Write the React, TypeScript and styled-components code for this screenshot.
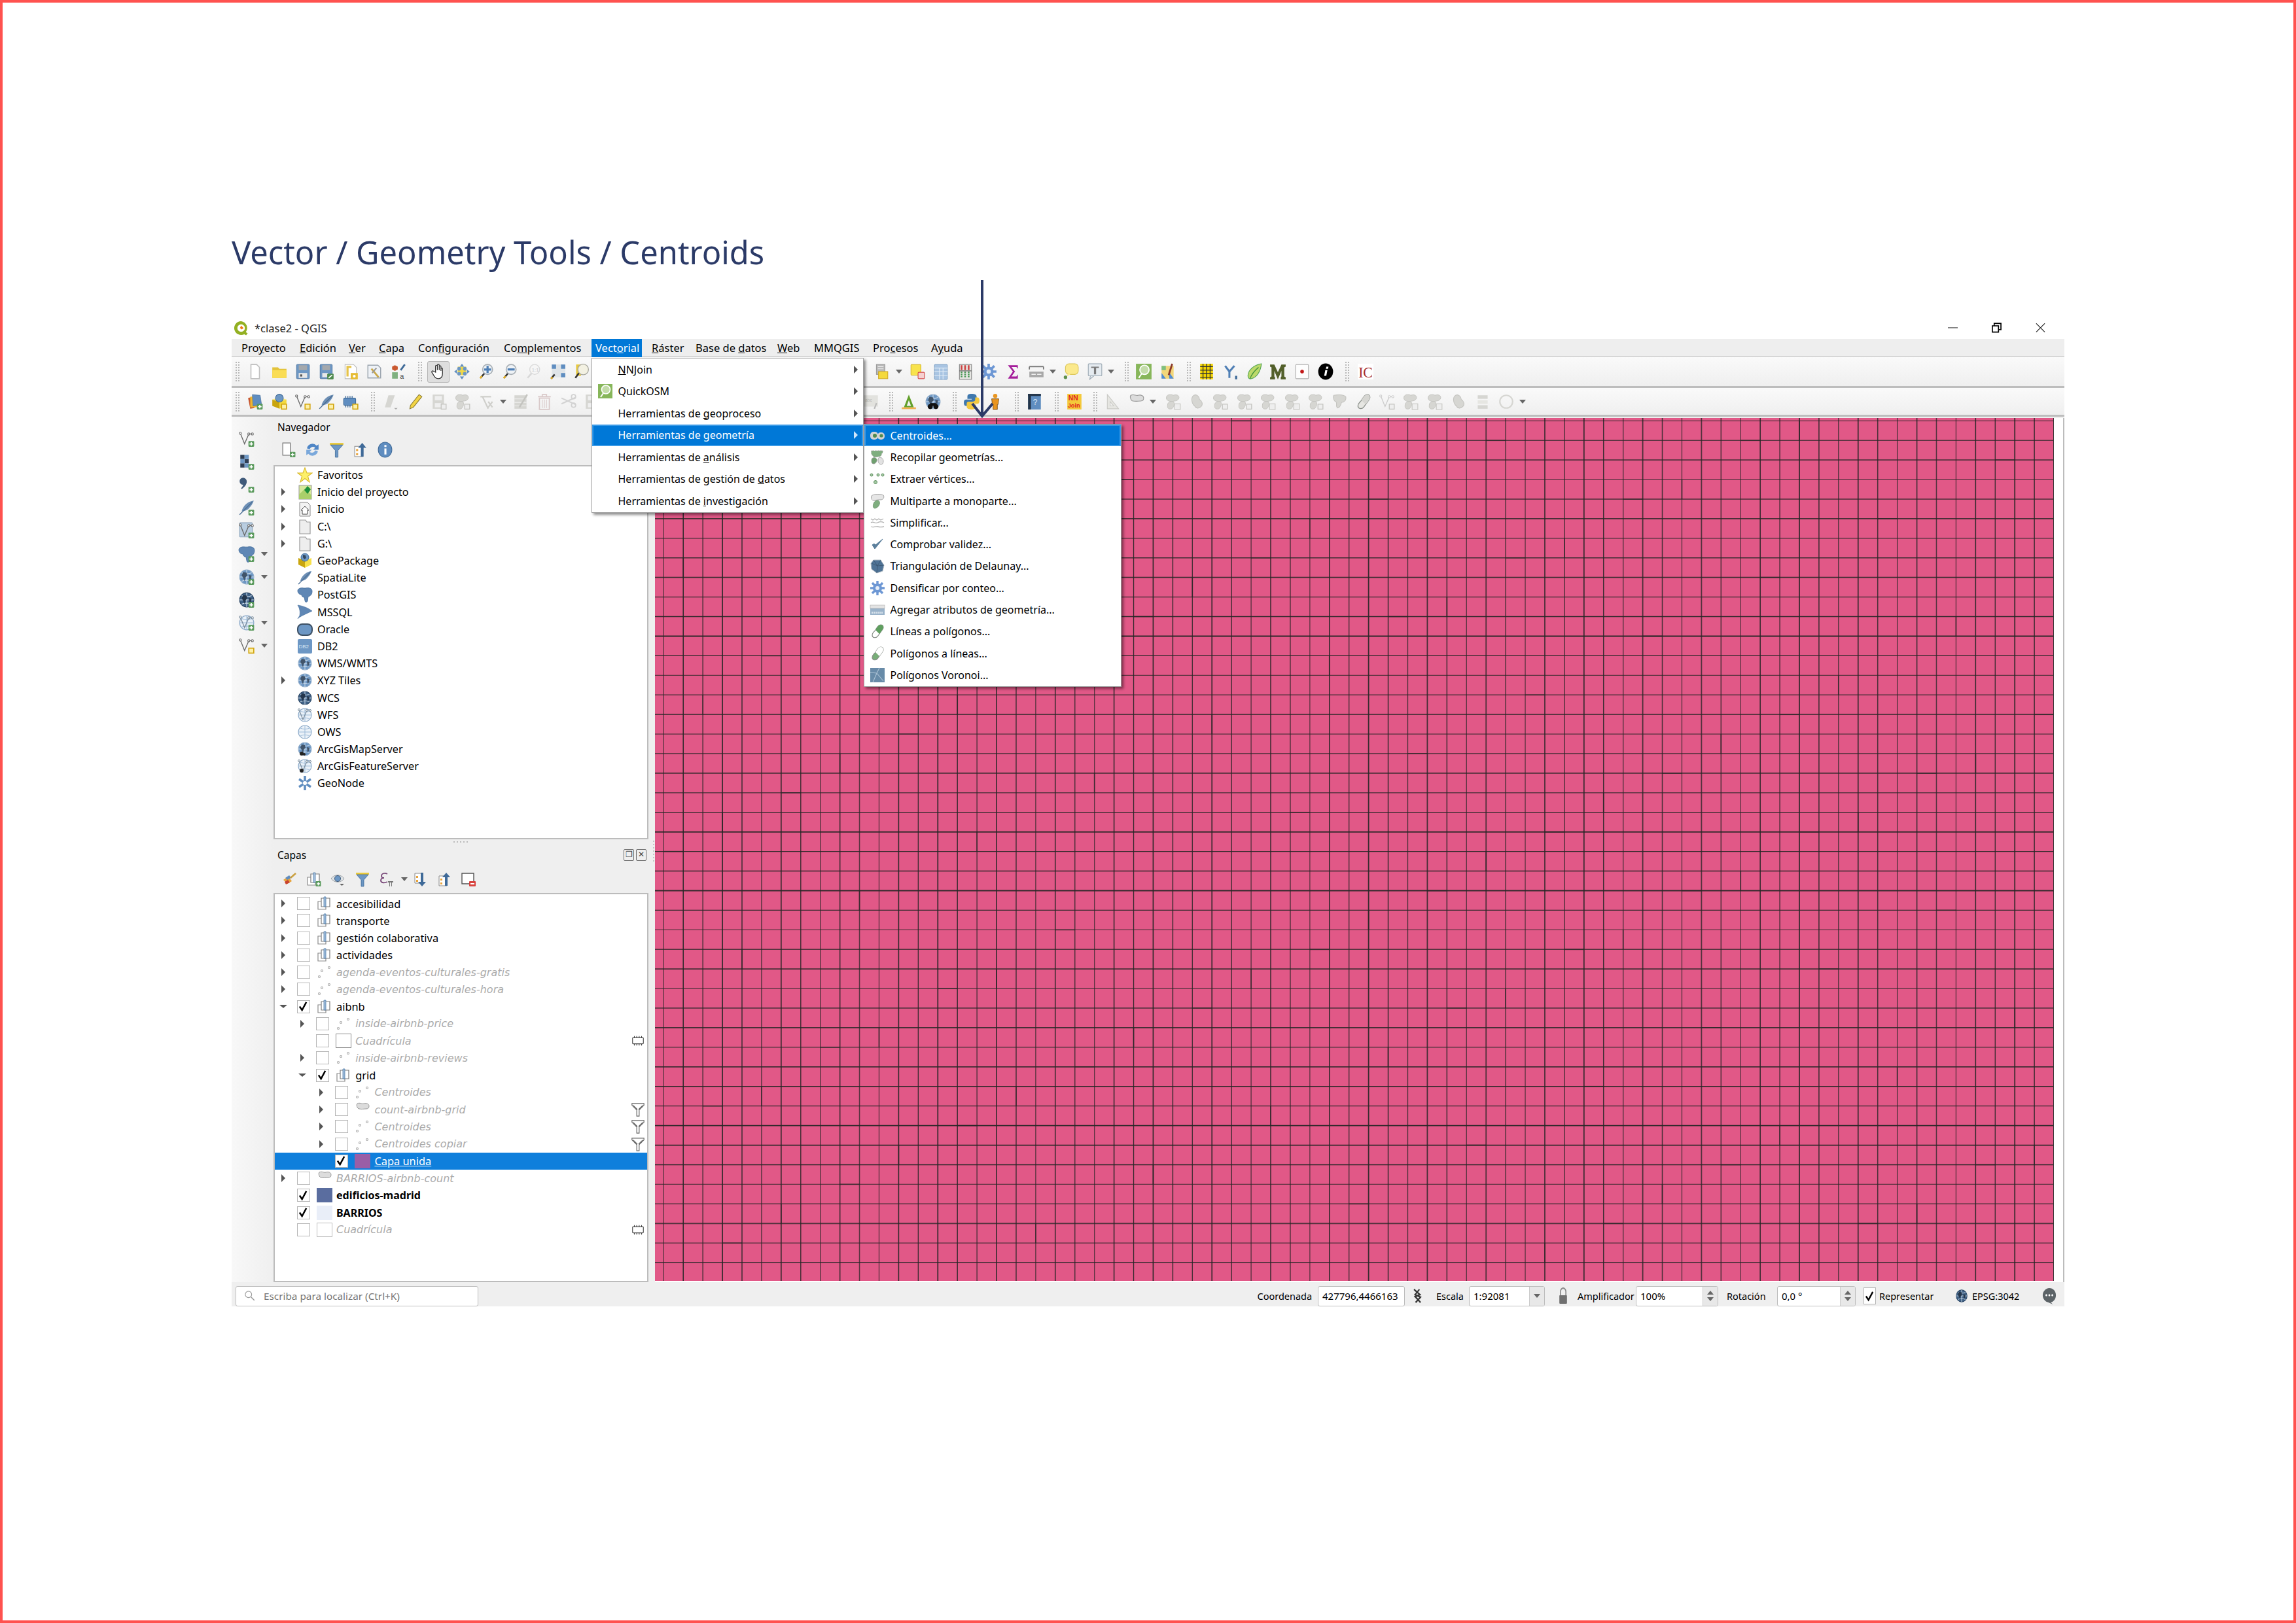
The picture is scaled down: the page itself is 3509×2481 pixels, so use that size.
import React, { useMemo } from "react";
import styled, { createGlobalStyle } from "styled-components";

const GlobalStyle = createGlobalStyle`
  html, body { margin: 0; padding: 0; background: #fff; }
  body { font-family: "Noto Sans", "Open Sans", sans-serif; }
`;

const uiFont = `"Noto Sans", "Open Sans", sans-serif`;

const blue = "#6d97c4";
const dkBlue = "#3f6a98";
const dim = "#d6d6d2";
const dimDk = "#c4c4c0";

const PlusBadge = () => (
  <>
    <rect x="14.5" y="15" width="8" height="8" rx="1" fill="#5a9a5c" />
    <path d="M18.5 16.5v5M16 19h5" stroke="#fff" strokeWidth="1.6" />
  </>
);
const YellowBadge = () => <rect x="15" y="15.5" width="7" height="7" fill="#fdf0a8" stroke="#d2a50e" strokeWidth="1.5" />;
const DimBadge = () => <rect x="15" y="15.5" width="7" height="7" fill="#eee" stroke={dimDk} strokeWidth="1.2" />;

const Lens = ({ children }: { children?: React.ReactNode }) => (
  <>
    <path d="M10 14 4 21" stroke="#333" strokeWidth="2.4" />
    <path d="M6 18.5 3.5 21.5" stroke="#e8b020" strokeWidth="2.4" />
    <circle cx="14" cy="9" r="7" fill="#eef2f6" stroke="#a9b0b6" strokeWidth="1.5" />
    {children}
  </>
);

const Globe = ({ dark = false, light = false }: { dark?: boolean; light?: boolean }) => (
  <>
    <circle cx="12" cy="12" r="10" fill={light ? "#eaf1f8" : dark ? "#3f6186" : blue} stroke={dark ? "#2c4766" : "#8eabc9"} strokeWidth="1.2" />
    <path d="M2 12h20M12 2v20M5 6c4 2 10 2 14 0M5 18c4-2 10-2 14 0" stroke={light ? "#9dbbd8" : "#cfdeec"} strokeWidth="1" fill="none" />
    {!light && <path d="M7 5l5 1 1 4-3 3-1 5-2-5-2-3zM15 9l4 1-1 5-2 2z" fill={dark ? "#24364c" : "#41546a"} />}
  </>
);

const Elephant = ({ fill = "#5f87b5" }: { fill?: string }) => (
  <path d="M1 6c0-3 4-5 9-4l3 0c5-1 10 0 10 5 0 4-2 7-6 8l-1 7c-1 2-4 2-4-1l-1-5c-3 0-4-2-4-4-3 0-6-2-6-6z" fill={fill} stroke="#3f6a98" strokeWidth=".8" />
);

const Feather = ({ color = "#6d8fb5" }: { color?: string }) => (
  <>
    <path d="M22 2C14 3 7 9 5 17c4 0 8-1 11-5 3-3 5-7 6-10z" fill={color} />
    <path d="M20 4 2 22" stroke="#4a6d94" strokeWidth="1.2" />
  </>
);

const Chip = () => (
  <>
    <rect x="2" y="7" width="17" height="10" rx="1.5" fill="#5f8dc0" stroke="#3f6a98" />
    <path d="M5 4v3M8 4v3M11 4v3M14 4v3M5 17v3M8 17v3M11 17v3" stroke="#3f6a98" strokeWidth="1.2" />
  </>
);

const Vee = ({ color = "#666" }: { color?: string }) => (
  <>
    <path d="M3 4 9 19 15 5l5 0" stroke={color} strokeWidth="1.2" fill="none" />
    <circle cx="3" cy="4" r="1.5" fill="#fff" stroke={color} />
    <circle cx="15" cy="5" r="1.5" fill="#fff" stroke={color} />
    <circle cx="20" cy="5" r="1.5" fill="#fff" stroke={color} />
  </>
);

const Blobs = ({ a = dim, b = dim, line = dimDk }: { a?: string; b?: string; line?: string }) => (
  <>
    <path d="M3 4c3-3 7-2 9-1 3-1 7-1 8 2 1 3-2 6-6 6-3 1-8 1-10-1-2-1-2-4-1-6z" fill={a} stroke={line} strokeWidth=".9" />
    <path d="M6 13c3-2 6-2 7 0s0 7-3 9c-3 1-6 0-6-3s0-5 2-6z" fill={b} stroke={line} strokeWidth=".9" />
  </>
);

const Bean = ({ a, b }: { a: string; b: string }) => (
  <>
    <path d="M17 2c4 0 5 4 3 7l-8 11c-3 3-8 2-8-2 0-4 3-5 5-8s4-8 8-8z" fill={b} stroke="#8a8f8a" strokeWidth="1.2" />
    <path d="M17 2c4 0 5 4 3 7l-5 7-6-6c2-3 4-8 8-8z" fill={a} />
  </>
);

const LayerGroup = () => (
  <>
    <path d="M2 9h12v12H2z" fill="#fff" stroke="#8a8a8a" strokeWidth="1.2" />
    <path d="M7 4h13v13H7z" fill="#fff" stroke="#7a7a7a" strokeWidth="1.2" />
    <path d="M11 2v15h3V2z" fill="#a5c0dd" stroke="#4f7ba8" strokeWidth=".8" />
  </>
);

const Points = ({ c = "#aaa" }: { c?: string }) => (
  <g fill="#fff" stroke={c} strokeWidth="1.1">
    <circle cx="8" cy="10" r="1.5" />
    <circle cx="19" cy="5" r="1.5" />
    <circle cx="4" cy="19" r="1.5" />
  </g>
);

const icons: Record<string, React.ReactNode> = {
  qgis: (
    <>
      <path d="M12 1a11 11 0 1 0 5 20.8l3 1.6 2.5-3-3-2A11 11 0 0 0 12 1zm0 5a6 6 0 1 1 0 12 6 6 0 0 1 0-12z" fill="#93b023" />
      <path d="M12 8l4 4-3 2-3-2z" fill="#ee7913" />
    </>
  ),
  new: <path d="M6 2h8l4 4v16H6z" fill="#fff" stroke="#c0c0c0" strokeWidth="1.5" />,
  open: (
    <>
      <path d="M2 6h8l2 2h10v13H2z" fill="#e3c33c" />
      <path d="M2 10h20v11H2z" fill="#fadd55" />
    </>
  ),
  save: (
    <>
      <rect x="3" y="2" width="18" height="20" rx="1" fill={blue} stroke={dkBlue} strokeWidth=".8" />
      <rect x="6" y="3" width="12" height="7" fill="#a4a8ac" />
      <rect x="6" y="14" width="12" height="7" fill="#e8e8e8" />
      <rect x="8" y="16" width="3" height="3" fill="#555" />
    </>
  ),
  saveAs: (
    <>
      <rect x="3" y="2" width="17" height="20" rx="1" fill={blue} stroke={dkBlue} strokeWidth=".8" />
      <rect x="6" y="3" width="11" height="7" fill="#a4a8ac" />
      <rect x="6" y="14" width="8" height="6" fill="#e8e8e8" />
      <rect x="13" y="15" width="9" height="8" rx="1" fill="#4f8b4f" />
      <path d="M15 21l5-4" stroke="#fff" strokeWidth="1.5" />
    </>
  ),
  newLayout: (
    <>
      <path d="M4 2h12l4 4v16H4z" fill="#fff" stroke="#bbb" />
      <path d="M6 4h7v3H9v12H6z" fill="#e6c34a" />
      <rect x="12" y="14" width="10" height="9" fill="#e6bd35" />
      <circle cx="17" cy="18.5" r="2" fill="#fff" />
    </>
  ),
  layoutMgr: (
    <>
      <path d="M3 3h14l4 4v14H3z" fill="#eef2f7" stroke="#9aa3ad" strokeWidth="1.3" />
      <path d="M8 8l10 12" stroke="#c9a84a" strokeWidth="2.6" />
      <path d="M15 7l-6 7" stroke="#999" strokeWidth="2" />
    </>
  ),
  style: (
    <>
      <path d="M7 3l4 2v4l-4 2-4-2V5z" fill="#c9582f" />
      <path d="M21 2l-6 8" stroke="#3f6a98" strokeWidth="2.6" />
      <rect x="3" y="13" width="8" height="9" fill="#7fb07f" />
      <text x="14" y="22" fontSize="10" fontFamily="Liberation Sans, sans-serif" fill="#444">a</text>
    </>
  ),
  hand: (
    <path d="M8 13V4.5c0-1.8 2.6-1.8 2.6 0V10V3c0-1.8 2.6-1.8 2.6 0v7-5c0-1.6 2.4-1.6 2.4 0v6-3c0-1.4 2.2-1.4 2.2 0v7c0 4-2 7-6 7-3 0-4.3-1-6-4l-3-5c-.8-1.5 1.2-2.6 2.3-1.4z" fill="#fff" stroke="#333" strokeWidth="1.2" />
  ),
  panTo: (
    <>
      <rect x="6" y="5" width="12" height="12" fill="#f0d848" />
      <path d="M12 1l3 4H9zM12 23l-3-4h6zM1 12l4-3v6zM23 12l-4 3V9z" fill="#5f8dc0" />
      <circle cx="8" cy="8" r="2.6" fill={blue} />
      <circle cx="16" cy="8" r="2.6" fill={blue} />
      <circle cx="8" cy="15" r="2.6" fill={blue} />
      <circle cx="16" cy="15" r="2.6" fill={blue} />
    </>
  ),
  zoomIn: <Lens><path d="M14 4v10M9 9h10" stroke="#4f7fb5" strokeWidth="3" /></Lens>,
  zoomOut: <Lens><path d="M9 9h10" stroke="#4f7fb5" strokeWidth="3" /></Lens>,
  zoomDim: (
    <>
      <path d="M10 14 4 21" stroke="#d8d8d8" strokeWidth="2.4" />
      <circle cx="14" cy="9" r="7" fill="#f6f6f6" stroke="#dadada" strokeWidth="1.3" />
      <text x="10" y="12" fontSize="7" fontFamily="Liberation Sans, sans-serif" fill="#c9c9c9">1:1</text>
    </>
  ),
  zoomFull: (
    <>
      <rect x="4" y="2" width="19" height="18" fill="#dfe4e8" />
      <path d="M4 2h6v6H4zM17 2h6v6h-6zM17 14h6v6h-6z" fill="#5f8dc0" />
      <path d="M8 16 3 22" stroke="#333" strokeWidth="2.4" />
      <path d="M5 20 3 22" stroke="#e8b020" strokeWidth="2.4" />
    </>
  ),
  zoomLayer: (
    <>
      <rect x="5" y="2" width="7" height="16" fill="#e8c93f" />
      <path d="M9 14 4 21" stroke="#333" strokeWidth="2.4" />
      <circle cx="15" cy="9" r="7.5" fill="#f3f1e2" stroke="#a9a9a0" strokeWidth="1.3" />
    </>
  ),
  stack: (
    <>
      <rect x="5" y="2" width="12" height="14" fill="#b9b9b9" stroke="#999" />
      <path d="M7 5h8M7 8h8" stroke="#eee" />
      <rect x="8" y="12" width="13" height="10" fill="#f4d93c" stroke="#cfa820" />
    </>
  ),
  deselect: (
    <>
      <rect x="3" y="2" width="14" height="15" rx="1" fill="#f8e34d" stroke="#d3b52b" />
      <rect x="13" y="13" width="9" height="9" rx="1" fill="#f5d0d0" stroke="#d24545" />
    </>
  ),
  table: (
    <>
      <rect x="3" y="2" width="18" height="21" rx="1" fill="#a8c4e2" stroke="#7fa2c7" />
      <path d="M3 7h18M3 12h18M3 17h18M10 7v16M15 7v16" stroke="#e3edf7" />
    </>
  ),
  abacus: (
    <>
      <rect x="4" y="2" width="17" height="21" fill="#e6e6e2" stroke="#888" />
      <path d="M4 11h17" stroke="#555" />
      <path d="M7 3v7M12 3v7M17 3v7" stroke="#c44" strokeWidth="2.4" />
      <path d="M7 12v9M12 12v9M17 12v9" stroke="#4d9a5a" strokeWidth="2.4" strokeDasharray="2 1" />
    </>
  ),
  gear: (
    <>
      <path d="M12 1v22M1 12h22M4 4l16 16M20 4 4 20" stroke="#6d97d4" strokeWidth="3.4" />
      <circle cx="12" cy="12" r="7" fill="#6d97d4" />
      <circle cx="12" cy="12" r="3" fill="#e6eef8" />
    </>
  ),
  sigma: <path d="M5 3h14v5l-2-2.5H10l5 6.5-5 7h7l2-3v6H5l7-10z" fill="#a41e9a" />,
  ruler: (
    <>
      <path d="M2 5h20M2 5v4M22 5v4" stroke="#777" strokeWidth="1.6" fill="none" />
      <rect x="2" y="12" width="20" height="8" fill="#a8a8a8" />
      <path d="M5 16h6M13 16h6" stroke="#eee" strokeWidth="1.4" />
    </>
  ),
  tip: (
    <>
      <rect x="5" y="1" width="18" height="15" rx="5" fill="#fbe98c" stroke="#dcc75b" />
      <path d="M9 15l-4 5 7-4z" fill="#fbe98c" />
      <circle cx="5" cy="20" r="2.5" fill="#5e8f4c" />
    </>
  ),
  textNote: (
    <>
      <rect x="3" y="1" width="19" height="17" rx="1" fill="#e5ebf0" stroke="#9aa8b3" />
      <path d="M7 5h11v2h-4v9h-3V7H7z" fill="#7b7b7b" />
      <path d="M6 18l-1 5 6-5z" fill="#e5ebf0" stroke="#9aa8b3" />
    </>
  ),
  quickOsm: (
    <>
      <rect x="1" y="1" width="22" height="22" fill="#87b65a" />
      <circle cx="13" cy="9.5" r="6.5" fill="#c3dca9" stroke="#fff" strokeWidth="1.6" />
      <path d="M9 15 5 21" stroke="#fff" strokeWidth="2" />
    </>
  ),
  plugTool: (
    <>
      <rect x="3" y="4" width="17" height="18" fill="#f2d67a" />
      <path d="M3 14l6 8h-6zM13 12l7 10h-6z" fill="#4f8bd4" />
      <path d="M3 4h6v6H3z" fill="#7fbf7f" />
      <path d="M18 1l-5 16" stroke="#8b3a2a" strokeWidth="2.6" />
    </>
  ),
  gridY: (
    <>
      <rect x="3" y="1" width="18" height="22" fill="#f3d400" />
      <path d="M3 5h18M3 10h18M3 15h18M3 20h18M7 1v22M12 1v22M17 1v22" stroke="#333" strokeWidth="1.2" />
    </>
  ),
  nodes: (
    <>
      <path d="M5 4l6 8 7-8M11 12v9" stroke="#4f7fb5" strokeWidth="2.8" fill="none" />
      <rect x="19" y="18" width="3" height="5" fill="#3f6a98" />
    </>
  ),
  leaf: (
    <>
      <path d="M22 1C11 3 3 10 3 18c0 3 2 5 5 4 8-2 13-11 14-21z" fill="#bcd96a" stroke="#4fa24f" />
      <path d="M18 6C12 11 8 16 6 22" stroke="#3b8f3b" strokeWidth="1.2" fill="none" />
    </>
  ),
  mmq: <path d="M1 2h6l5 11 5-11h6v3l-2 1v13l2 1v3h-7v-3l1-1V11l-5 12-5-12v8l1 1v3H1v-3l2-1V6L1 5z" fill="#53602b" />,
  dot: (
    <>
      <rect x="3" y="2" width="18" height="20" rx="1" fill="#fdfdfd" stroke="#aaa" />
      <circle cx="12" cy="12" r="2.6" fill="#c21818" />
    </>
  ),
  info: (
    <>
      <ellipse cx="12" cy="12" rx="10.5" ry="11.5" fill="#000" />
      <path d="M13 5h3l-.6 3h-3zM11.5 10h3l-1.6 8h-3z" fill="#fff" />
    </>
  ),
  ic: (
    <>
      <rect x="1" y="1" width="22" height="22" fill="#fff" />
      <text x="2" y="20" fontSize="21" fontFamily="Liberation Serif, serif" fill="#a62a2a" textLength="20" lengthAdjust="spacingAndGlyphs">IC</text>
    </>
  ),
  addLayer: (
    <>
      <path d="M2 7l6-2 3 16-6 1z" fill="#c7562f" />
      <path d="M5 5h12v15H5z" fill="#edb731" />
      <path d="M8 2l11 1 2 13-12 2z" fill="#5f8dc0" stroke="#3f6a98" strokeWidth=".6" />
      <PlusBadge />
    </>
  ),
  addGpkg: (
    <>
      <path d="M2 9l10 3v10L2 18z" fill="#c9a50e" />
      <path d="M12 12l10-3v9l-10 4z" fill="#f3d93d" />
      <path d="M2 9l10-3 10 3-10 3z" fill="#f7e77a" />
      <circle cx="12" cy="7" r="5.5" fill={blue} stroke="#3f6a98" />
      <YellowBadge />
    </>
  ),
  vYellow: <><Vee /><YellowBadge /></>,
  vGreen: <><Vee /><PlusBadge /></>,
  featherY: <><Feather /><YellowBadge /></>,
  featherG: <><Feather /><PlusBadge /></>,
  chipY: <><Chip /><YellowBadge /></>,
  rasterG: (
    <>
      <path d="M3 2h6v6H3zM9 8h6v6H9zM3 14h6v6H3z" fill="#2e3f55" />
      <path d="M9 2h6v6H9zM3 8h6v6H3zM9 14h6v6H9z" fill="#6d97c4" />
      <PlusBadge />
    </>
  ),
  commaG: <><path d="M7 2a5.5 5.5 0 0 1 5 7c-.8 4-4 7-7 9l-1-1c2-2 3-4 3-5a5 5 0 0 1 0-10z" fill="#3f5a7a" /><PlusBadge /></>,
  virtualG: <><rect x="2" y="1" width="18" height="20" rx="1" fill="#b9cde0" stroke="#8ba4bc" /><Vee /><PlusBadge /></>,
  pgG: <><Elephant /><PlusBadge /></>,
  wmsG: <><Globe /><PlusBadge /></>,
  wcsG: <><Globe dark /><PlusBadge /></>,
  wfsG: <><Globe light /><Vee color="#7a8c9c" /><PlusBadge /></>,
  pageG: <><path d="M4 2h11v18H4z" fill="#fff" stroke="#777" strokeWidth="1.2" /><PlusBadge /></>,
  refresh: (
    <>
      <path d="M4 10a8 8 0 0 1 14-4l3-2v8h-8l3-3a5 5 0 0 0-8 2z" fill="#4f86c6" />
      <path d="M20 14a8 8 0 0 1-14 4l-3 2v-8h8l-3 3a5 5 0 0 0 8-2z" fill="#7aa8db" />
    </>
  ),
  filter: (
    <>
      <path d="M2 2h20v3H2z" fill="#e9c93a" />
      <path d="M3 5h18l-7 8v10h-4V13z" fill="#6d97c4" stroke="#3f6a98" strokeWidth=".8" />
    </>
  ),
  collapse: (
    <>
      <path d="M3 7h12v15H3z" fill="#fff" stroke="#8a8a8a" />
      <path d="M5 11h3v3H5zM5 17h3v3H5z" fill="#e8a33a" />
      <path d="M14 2l6 7h-4v13h-4V9H8z" fill="#3f6a98" />
    </>
  ),
  expand: (
    <>
      <path d="M3 3h12v15H3z" fill="#fff" stroke="#8a8a8a" />
      <path d="M5 7h3v3H5zM5 13h3v3H5z" fill="#e8a33a" />
      <path d="M14 23l-6-7h4V2h4v14h4z" fill="#3f6a98" />
    </>
  ),
  infoB: (
    <>
      <ellipse cx="12" cy="12" rx="10" ry="11" fill="#5f8dc0" stroke="#3f6a98" />
      <path d="M11 5h3v3h-3zM11 10h3v9h-3z" fill="#fff" />
    </>
  ),
  star: <path d="M12 1l3 8h8l-6.5 5 2.5 9-7-5.5L5 23l2.5-9L1 9h8z" fill="#fdf06a" stroke="#d9b92b" strokeWidth="1.1" />,
  projectHome: (
    <>
      <rect x="3" y="2" width="19" height="21" fill="#d6e89a" stroke="#999" />
      <path d="M3 16l9-9 10 10v6H3z" fill="#aacf6a" />
      <path d="M16 3l5 5-5 7-5-6z" fill="#1c8f3a" />
    </>
  ),
  homeFolder: (
    <>
      <path d="M4 2h12l4 4v17H4z" fill="#f3f3f3" stroke="#8a8a8a" />
      <path d="M12 8l6 6h-2v6H8v-6H6z" fill="#fff" stroke="#444" />
    </>
  ),
  folder: <path d="M4 2h9l2 3h5v18H4z" fill="#eeeeee" stroke="#9a9a9a" strokeWidth="1.2" />,
  gpkg: (
    <>
      <path d="M2 8l10 4v11L2 18z" fill="#c9a50e" />
      <path d="M12 12l10-4v10l-10 5z" fill="#f7e04a" />
      <circle cx="12" cy="7" r="6" fill={blue} stroke="#3f6a98" />
      <path d="M9 3l4 1 1 4-3 2-2-3z" fill="#33465c" />
    </>
  ),
  feather: <Feather />,
  elephant: <Elephant />,
  mssql: <path d="M1 1c6 1 14 3 22 9-6 3-14 6-20 10l-2 2 3-5c1-6 0-11-3-16z" fill="#5f87b5" stroke="#3f6a98" strokeWidth=".6" />,
  oracle: <rect x="1" y="4" width="22" height="17" rx="7" fill="#6d97c4" stroke="#3c4f63" strokeWidth="2" />,
  db2: (
    <>
      <rect x="1" y="1" width="22" height="22" rx="2" fill="#6d97c4" />
      <text x="2.5" y="15" fontSize="8" fontFamily="Liberation Sans, sans-serif" fill="#dbe7f3">DB2</text>
    </>
  ),
  globe: <Globe />,
  globeDark: <Globe dark />,
  globeWfs: <><Globe light /><Vee color="#7a8c9c" /></>,
  globeLight: <Globe light />,
  arc: <><Globe /><circle cx="7" cy="19" r="3" fill="#222" /><circle cx="11" cy="20" r="2" fill="#222" /></>,
  arcF: <><Globe light /><Vee color="#7a8c9c" /><circle cx="7" cy="19" r="3" fill="#222" /></>,
  geonode: (
    <>
      <path d="M12 1v22M3 6l18 12M21 6 3 18" stroke="#5f8dc0" strokeWidth="3.6" />
      <circle cx="12" cy="12" r="3" fill="#fff" />
    </>
  ),
  brush: (
    <>
      <path d="M3 13l8-5 5 7-7 4z" fill="#e8a33a" />
      <path d="M5 16l5-3 3 4-6 3z" fill="#c9432f" />
      <path d="M6 10l6-4 3 4-6 3z" fill="#5f8dc0" />
      <path d="M14 10l8-7" stroke="#caa040" strokeWidth="2.6" />
    </>
  ),
  groupAdd: <><LayerGroup /><PlusBadge /></>,
  group: <LayerGroup />,
  eye: (
    <>
      <path d="M1 11c5-7 15-7 20 0-5 7-15 7-20 0z" fill="#dfe3e6" stroke="#9aa0a5" />
      <circle cx="11" cy="11" r="4.5" fill="#6d97c4" stroke="#3f5a7a" />
      <path d="M14 19h7l-3.5 3z" fill="#666" />
    </>
  ),
  epsilon: (
    <>
      <path d="M12 4C8 2 3 3 3 7c0 2 2 3 4 3-3 0-5 1-5 4 0 4 6 4 10 2" fill="none" stroke="#7a4a7a" strokeWidth="1.8" />
      <path d="M13 15h8v2h-2v6h-1v-6h-2v6h-1v-6h-2z" fill="#777" />
    </>
  ),
  removeLayer: (
    <>
      <path d="M2 3h18v16H2z" fill="#fff" stroke="#555" strokeWidth="1.4" />
      <rect x="13" y="15" width="10" height="8" rx="1" fill="#d8433f" />
      <path d="M15 19h6" stroke="#fff" strokeWidth="2" />
    </>
  ),
  points: <Points />,
  polyDim: (
    <path d="M4 3c4-2 7 1 10 0 4-1 8 0 8 4 0 3-2 4-4 4-4 0-7 1-11 0-3 0-5-6-3-8z" fill="#dcdcdc" stroke="#999" />
  ),
  ind: (
    <>
      <rect x="3" y="7" width="18" height="10" rx="1" fill="#fff" stroke="#444" strokeWidth="1.2" />
      <path d="M6 4v3M10 4v3M14 4v3M18 4v3M6 17v3M10 17v3M14 17v3M18 17v3" stroke="#444" strokeWidth="1.2" />
    </>
  ),
  indFilter: (
    <path d="M2 2h20v3l-8 8v10h-4V13L2 5zM4 5l7 7M20 5l-7 7" fill="#fff" stroke="#666" strokeWidth="1.3" />
  ),
  pencilDim: (
    <>
      <path d="M8 3h9l-6 17H3z" fill={dim} />
      <path d="M16 21h5l-2.5 2z" fill="#aaa" />
    </>
  ),
  pencil: (
    <>
      <path d="M17 2l4 3L9 20l-5 2 1-5z" fill="#f2d445" stroke="#8a7a30" />
    </>
  ),
  saveDim: (
    <>
      <rect x="3" y="2" width="16" height="20" fill={dim} />
      <rect x="6" y="4" width="10" height="6" fill="#efefef" />
      <rect x="6" y="14" width="9" height="6" fill="#efefef" />
      <DimBadge />
    </>
  ),
  polyAddDim: <><Blobs /><DimBadge /></>,
  splitDim: <path d="M3 5h15M6 5l8 17M14 12l6 8M20 12l-6 8" stroke="#cfcfcb" strokeWidth="2" fill="none" />,
  editDim: (
    <>
      <rect x="3" y="3" width="17" height="19" fill={dim} />
      <path d="M3 8h17M3 13h17M3 18h17" stroke="#f0f0f0" />
      <path d="M21 2 10 20" stroke="#c4c4c0" strokeWidth="2.4" />
    </>
  ),
  trash: (
    <>
      <path d="M3 5h18M9 5V2h6v3" stroke="#d9c9c9" strokeWidth="1.6" fill="none" />
      <path d="M5 7h14v16H5z" fill="none" stroke="#d9c9c9" strokeWidth="1.6" />
      <path d="M9 9v12M12 9v12M15 9v12" stroke="#d9c9c9" />
    </>
  ),
  scissors: (
    <>
      <path d="M2 7l20 9M2 15l20-9" stroke="#d2d2d2" strokeWidth="1.8" />
      <circle cx="19" cy="5" r="3" fill="none" stroke="#d2d2d2" strokeWidth="1.6" />
      <circle cx="19" cy="17" r="3" fill="none" stroke="#d2d2d2" strokeWidth="1.6" />
    </>
  ),
  attrDim: <><rect x="1" y="3" width="20" height="16" fill="#e2e2de" /><text x="3" y="12" fontSize="6" fontFamily="Liberation Sans, sans-serif" fill="#b8b8b4">abc</text><path d="M19 14l-3 8" stroke="#bbb" strokeWidth="2" /></>,
  triangle: (
    <>
      <path d="M12 2l7 18H5zM12 10l-3 8h6z" fill="#63a02c" fillRule="evenodd" />
      <rect x="2" y="20" width="20" height="2.5" fill="#f0b050" />
    </>
  ),
  globeBino: <><Globe /><circle cx="8" cy="19" r="3.5" fill="#111" /><circle cx="16" cy="19" r="3.5" fill="#111" /><rect x="8" y="14" width="8" height="4" fill="#111" /></>,
  python: (
    <>
      <path d="M12 1c-4 0-6 1-6 4v3h6v1H4c-3 0-3 3-3 5s1 4 3 4h3v-3c0-2 2-3 4-3h5c2 0 3-1 3-3V5c0-3-3-4-7-4z" fill="#3f78ae" />
      <path d="M12 23c4 0 6-1 6-4v-3h-6v-1h8c3 0 3-3 3-5s-1-4-3-4h-3v3c0 2-2 3-4 3H8c-2 0-3 1-3 3v4c0 3 3 4 7 4z" fill="#f2c83f" />
    </>
  ),
  person: (
    <>
      <circle cx="12" cy="4" r="3" fill="#e9951f" />
      <path d="M7 8h10l-1 8h-1v7H9v-7H8z" fill="#e9951f" stroke="#7a4a10" strokeWidth=".8" />
    </>
  ),
  book: (
    <>
      <rect x="3" y="1" width="18" height="22" fill="#5f8dc0" />
      <rect x="3" y="1" width="4" height="22" fill="#233448" />
      <rect x="3" y="1" width="18" height="3" fill="#233448" />
      <text x="10" y="17" fontSize="11" fontFamily="Liberation Sans, sans-serif" fill="#dce8f4">?</text>
    </>
  ),
  nnjoin: (
    <>
      <rect x="2" y="1" width="20" height="22" fill="#f4c93a" />
      <text x="3.5" y="10" fontSize="9.5" fontWeight="700" fontFamily="Liberation Sans, sans-serif" fill="#e02020">NN</text>
      <text x="2.5" y="20" fontSize="8.5" fontWeight="700" fontFamily="Liberation Sans, sans-serif" fill="#e02020">Join</text>
    </>
  ),
  square: <path d="M4 2l16 20H4zM8 12v6h5z" fill="#e6e6e2" stroke="#c9c9c5" fillRule="evenodd" />,
  dimA: <><Blobs /><path d="M14 15h8v8h-8z" fill="#eee" stroke={dimDk} /></>,
  dimB: <><Blobs /><DimBadge /></>,
  dimLoop: <path d="M8 3c4-2 8 2 8 6 4 2 5 7 2 10s-7 3-9-1c-4-3-6-12-1-15z" fill={dim} stroke={dimDk} />,
  dimTail: <path d="M4 3c6-1 14-1 17 2 1 5-2 8-6 8-1 4-3 8-6 8-2-3-1-6-1-8-3-1-6-6-4-10z" fill={dim} stroke={dimDk} />,
  dimBean: <Bean a={dim} b="#e6e6e2" />,
  dimV: <><Vee color="#ccc" /><DimBadge /></>,
  dimStack: <><rect x="5" y="3" width="14" height="5" fill={dim} /><rect x="5" y="10" width="14" height="5" fill="#e6e6e2" /><rect x="5" y="17" width="14" height="5" fill={dim} /></>,
  dimRing: <circle cx="12" cy="12" r="9" fill="none" stroke={dim} strokeWidth="2" />,
  centroid: (
    <>
      <rect x="1" y="6" width="12" height="12" rx="5" fill="#d4d4d4" />
      <rect x="12" y="7" width="11" height="11" rx="5" fill="#d4d4d4" />
      <circle cx="8" cy="12" r="3" fill="#4f8b4f" />
      <circle cx="18" cy="12" r="2.6" fill="#4f8b4f" />
    </>
  ),
  collect: (
    <>
      <path d="M3 2h17v3l-2 2c1 3-3 4-5 4-3 1-6 1-8-1-2-2-3-5-2-8z" fill="#7fae7f" stroke="#9a9a9a" strokeWidth="1" strokeDasharray="1.5 1" />
      <path d="M5 13c3-1 5 0 6 2s-1 6-4 7c-3 0-4-1-4-4s0-4 2-5z" fill="#6fa06f" stroke="#9a9a9a" strokeWidth=".8" />
      <path d="M15 12c3 0 6 2 6 6s-2 5-4 5-4-3-4-6 1-5 2-5z" fill="#e2e2e2" stroke="#9a9a9a" strokeWidth=".8" />
    </>
  ),
  vertices: (
    <g fill="#a6cba6" stroke="#5f8f5f">
      <circle cx="3" cy="6" r="2" />
      <circle cx="13" cy="6" r="2" />
      <circle cx="20" cy="6" r="2" />
      <circle cx="9" cy="17" r="2.5" />
    </g>
  ),
  multi: (
    <>
      <path d="M3 4c3-3 14-3 18-1 2 3 0 7-4 7-3 0-6 0-9 1-3 1-7-2-5-7z" fill="#e6e6e6" stroke="#a0a0a0" />
      <path d="M12 11c3 0 4 3 3 6s-4 6-7 6-3-4-2-7 3-5 6-5z" fill="#7fae7f" stroke="#6a8f6a" strokeWidth=".8" />
    </>
  ),
  simplify: <path d="M2 6l3 2 3-2 3 2 3-2 3 2 4-2M2 12c4-3 6 2 10 0s6-2 10 0M2 18c4 2 6-1 10 0s6 1 10 0" stroke="#b0b0b0" strokeWidth="1.3" fill="none" />,
  check: <path d="M4 13l4 6L20 4 9 13l-2-2z" fill="#5b7f9c" stroke="#5b7f9c" />,
  delaunay: (
    <>
      <path d="M6 3h11l5 8-2 9-9 3-8-6-1-9z" fill="#4f7396" stroke="#b5bec6" />
      <path d="M6 3l6 9 5-9M3 8l9 4 10-1M12 12l-1 11" stroke="#3a5570" strokeWidth=".8" fill="none" />
    </>
  ),
  addGeom: (
    <>
      <rect x="1" y="5" width="22" height="15" fill="#9ab3ca" />
      <rect x="1" y="5" width="22" height="5" fill="#e4e4e4" stroke="#aaa" strokeWidth=".6" />
      <path d="M4 15v3M7 15v3M10 15v3M13 15v3M16 15v3M19 15v3" stroke="#fff" strokeWidth="1.2" />
    </>
  ),
  linePoly: <Bean a="#5f9f5f" b="#fff" />,
  polyLine: <Bean a="#fff" b="#78ae78" />,
  voronoi: (
    <>
      <rect x="1" y="1" width="22" height="22" fill="#688ba8" />
      <path d="M1 8l10 1 4-8M11 9l10 12M11 9L5 23" stroke="#aec4d6" strokeWidth="1.1" fill="none" />
    </>
  ),
  lock: (
    <>
      <path d="M7 11V6a5 5 0 0 1 10 0v5" fill="none" stroke="#8a8a8a" strokeWidth="2" />
      <rect x="5" y="11" width="14" height="12" rx="1" fill="#707070" />
    </>
  ),
  crsLink: <path d="M6 2l11 8-9 3 10 9M16 2 8 10l10 4-9 8" stroke="#333" strokeWidth="2.4" fill="none" />,
  msg: (
    <>
      <path d="M12 1c6 0 11 4 11 10s-5 10-9 10l4 3-8-3C5 20 1 16 1 11S6 1 12 1z" fill="#5c6367" />
      <circle cx="7" cy="11" r="1.5" fill="#fff" />
      <circle cx="12" cy="11" r="1.5" fill="#fff" />
      <circle cx="17" cy="11" r="1.5" fill="#fff" />
    </>
  ),
  search: (
    <>
      <circle cx="9" cy="9" r="6.5" fill="none" stroke="#999" strokeWidth="1.5" />
      <path d="M14 14l7 7" stroke="#999" strokeWidth="2" />
    </>
  ),
};

const IconSvg = styled.svg<{ $h: number; $w: number }>`
  display: block;
  flex: none;
  width: ${(p) => p.$w}px;
  height: ${(p) => p.$h}px;
`;

const Icon = ({ name, size = 26, width }: { name: string; size?: number; width?: number }) => (
  <IconSvg $h={size} $w={width ?? size} viewBox="0 0 24 24" preserveAspectRatio="none">
    {icons[name]}
  </IconSvg>
);

const Page = styled.div`
  box-sizing: border-box;
  width: 3509px;
  height: 2481px;
  border: 4px solid #ff524f;
  padding: 351px 0 0 350px;
  background: #fff;
  overflow: hidden;
`;

const Title = styled.h1`
  margin: 0 0 65px;
  height: 60px;
  font: 400 48.8px/60px "Noto Sans", sans-serif;
  color: #2b3a67;
`;

const AppWindow = styled.div`
  position: relative;
  display: flex;
  flex-direction: column;
  width: 2801px;
  height: 1517px;
  font-family: ${uiFont};
  font-size: 16px;
  color: #000;
  background: #efefef;
`;

const TitleBar = styled.div`
  flex: none;
  height: 38px;
  display: flex;
  align-items: center;
  background: #fff;
  padding: 4px 29px 0 3px;
  box-sizing: border-box;
`;

const WindowName = styled.span`
  margin-left: 9px;
  font-size: 16.5px;
  color: #222;
`;

const WindowButtons = styled.div`
  margin-left: auto;
  display: flex;
  align-items: center;
  gap: 52px;
`;

const MenuBar = styled.div`
  flex: none;
  height: 28px;
  box-sizing: border-box;
  display: flex;
  align-items: stretch;
  background: #eeeeee;
  border-bottom: 2px solid #d6d6d6;
`;

const MenuTop = styled.div<{ $w: number; $active?: boolean; $pad?: number }>`
  flex: none;
  width: ${(p) => p.$w}px;
  padding-left: ${(p) => p.$pad ?? 0}px;
  box-sizing: border-box;
  font-size: 16.5px;
  line-height: 27px;
  white-space: nowrap;
  background: ${(p) => (p.$active ? "#0078d7" : "transparent")};
  color: ${(p) => (p.$active ? "#fff" : "#000")};
  height: ${(p) => (p.$active ? "29px" : "auto")};
`;

const ToolRow = styled.div<{ $h: number; $line: string }>`
  flex: none;
  height: ${(p) => p.$h}px;
  box-sizing: border-box;
  display: flex;
  align-items: center;
  background: linear-gradient(#fafafa, #efefef);
  border-bottom: 3px solid ${(p) => p.$line};
`;

const Slot = styled.div<{ $pressed?: boolean }>`
  flex: none;
  width: 36.4px;
  height: 33px;
  box-sizing: border-box;
  display: flex;
  align-items: center;
  justify-content: center;
  ${(p) =>
    p.$pressed &&
    `background: #dedede; border: 1px solid #b4b4b4; border-radius: 3px; width: 34px; margin: 0 1.2px;`}
`;

const Grip = styled.div`
  flex: none;
  width: 8px;
  height: 32px;
  background-image: radial-gradient(circle, #b8b8b8 1px, transparent 1.2px);
  background-size: 4px 4px;
`;

const Spacer = styled.div<{ $w: number }>`
  flex: none;
  width: ${(p) => p.$w}px;
`;

const DropCaret = styled.div<{ $w?: number }>`
  flex: none;
  width: ${(p) => p.$w ?? 14}px;
  display: flex;
  justify-content: center;
  &::after {
    content: "";
    border-left: 5px solid transparent;
    border-right: 5px solid transparent;
    border-top: 6px solid #666;
  }
`;

type ToolItem = string | number;

const Toolbar = ({ items, h, line }: { items: ToolItem[]; h: number; line: string }) => (
  <ToolRow $h={h} $line={line}>
    {items.map((item, i) => {
      if (typeof item === "number") return <Spacer key={i} $w={item} />;
      if (item === "|") return <Grip key={i} />;
      if (item === "v") return <DropCaret key={i} />;
      return (
        <Slot key={i} $pressed={item === "hand"}>
          <Icon name={item} />
        </Slot>
      );
    })}
  </ToolRow>
);

const toolsTop: ToolItem[] = [
  5, "|", 5, "new", "open", "save", "saveAs", "newLayout", "layoutMgr", "style",
  11, "|", 6, "hand", "panTo", "zoomIn", "zoomOut", "zoomDim", "zoomFull", "zoomLayer",
  422, "stack", 2, "v", 3, "deselect", "table", "abacus", "gear", "sigma", "ruler", "v", 2, "tip", "textNote", "v",
  13, "|", 4, "quickOsm", "plugTool", 10, "|", 5, "gridY", "nodes", "leaf", "mmq", "dot", "info", 11, "|", 6, "ic",
];

const toolsBottom: ToolItem[] = [
  5, "|", 5, "addLayer", "addGpkg", "vYellow", "featherY", "chipY", 12, "|", 6,
  "pencilDim", "pencil", "saveDim", "polyAddDim", "splitDim", "v", 2, "editDim", "trash", "scissors", "saveDim",
  390.4, "attrDim", 8, "|", 5, "triangle", "globeBino", 11, "|", 3.6, "python", "person", 11, "|", 4, "book", 12, "|", 5, "nnjoin", 10, "|", 4.4,
  "square", "polyDim", "v", 5, "dimA", "dimLoop", "dimB", "dimB", "dimA", "dimA", "dimB", "dimTail", "dimBean", "dimV", "dimA", "dimA", "dimLoop", "dimStack", "dimRing", "v",
];

const Main = styled.div`
  flex: none;
  height: 1323px;
  display: flex;
`;

const SideBar = styled.div`
  flex: none;
  width: 64px;
  box-sizing: border-box;
  padding: 16px 0 0;
  background: linear-gradient(90deg, #f8f8f8, #efefef);
  display: flex;
  flex-direction: column;
  align-items: stretch;
`;

const SideSlot = styled.div`
  height: 35.2px;
  display: flex;
  align-items: center;
  padding-left: 10px;
  gap: 7px;
`;

const PanelColumn = styled.div`
  flex: none;
  width: 573px;
  display: flex;
  flex-direction: column;
`;

const PanelHeader = styled.div`
  flex: none;
  height: 31px;
  box-sizing: border-box;
  padding: 0 3px 0 6px;
  display: flex;
  align-items: center;
  justify-content: space-between;
  font-size: 15.5px;
`;

const PanelButtons = styled.div`
  display: flex;
  gap: 3px;
`;

const PanelButton = styled.div`
  width: 16px;
  height: 18px;
  box-sizing: border-box;
  border: 1.5px solid #6c6c6c;
  border-radius: 2px;
  font-size: 12px;
  line-height: 14px;
  text-align: center;
  color: #444;
`;

const PanelTools = styled.div<{ $h: number; $pb?: number }>`
  flex: none;
  height: ${(p) => p.$h}px;
  box-sizing: border-box;
  display: flex;
  align-items: center;
  padding: 0 0 ${(p) => p.$pb ?? 0}px 4px;
`;

const PanelTool = styled.div<{ $w: number }>`
  flex: none;
  width: ${(p) => p.$w}px;
  display: flex;
  justify-content: center;
`;

const TreeBox = styled.div<{ $h: number; $pt?: number }>`
  flex: none;
  height: ${(p) => p.$h}px;
  box-sizing: border-box;
  background: #fff;
  border: 2px solid #bcbcbc;
  padding-top: ${(p) => p.$pt ?? 1}px;
  overflow: hidden;
`;

const Splitter = styled.div`
  flex: none;
  height: 8px;
  display: flex;
  justify-content: center;
  align-items: center;
  &::after {
    content: "";
    width: 24px;
    height: 2px;
    background: repeating-linear-gradient(90deg, #bbb 0 2px, transparent 2px 5px);
  }
`;

const TreeRow = styled.div<{ $level?: number; $selected?: boolean }>`
  height: 26.26px;
  display: flex;
  align-items: center;
  padding-left: ${(p) => 7 + (p.$level ?? 0) * 29.2}px;
  padding-right: 1px;
  background: ${(p) => (p.$selected ? "#0f7fdc" : "transparent")};
  white-space: nowrap;
`;

const BrowserRow = styled(TreeRow)`
  height: 26.2px;
`;

const Expander = styled.span<{ $state?: "open" | "closed" }>`
  flex: none;
  width: 12px;
  height: 12px;
  margin-right: 14.6px;
  display: flex;
  align-items: center;
  justify-content: center;
  &::after {
    content: "";
    ${(p) =>
      p.$state === "closed"
        ? "border-left: 6px solid #555; border-top: 6px solid transparent; border-bottom: 6px solid transparent;"
        : p.$state === "open"
        ? "border-top: 5px solid #555; border-left: 6px solid transparent; border-right: 6px solid transparent;"
        : ""}
  }
`;

const CheckBox = styled.span<{ $on?: boolean; $w?: number; $h?: number }>`
  flex: none;
  box-sizing: border-box;
  width: ${(p) => p.$w ?? 20}px;
  height: ${(p) => p.$h ?? 20}px;
  background: #fff;
  border: 1.5px solid #b5b5b5;
  display: flex;
  align-items: center;
  justify-content: center;
`;

const RowName = styled.span<{ $tone?: "normal" | "off" | "bold" | "selected" }>`
  margin-left: 6px;
  font-size: ${(p) => (p.$tone === "off" ? "16px" : p.$tone === "bold" ? "16px" : "16.4px")};
  font-family: ${(p) => (p.$tone === "off" ? `"DejaVu Sans", sans-serif` : uiFont)};
  color: ${(p) => (p.$tone === "off" ? "#ababab" : p.$tone === "selected" ? "#fff" : "#000")};
  font-style: ${(p) => (p.$tone === "off" ? "italic" : "normal")};
  font-weight: ${(p) => (p.$tone === "bold" ? 700 : 400)};
  text-decoration: ${(p) => (p.$tone === "selected" ? "underline" : "none")};
`;

const BrowserName = styled.span`
  margin-left: 7.4px;
  font-size: 16.2px;
`;

const Swatch = styled.span<{ $color: string; $line?: string }>`
  flex: none;
  width: 24px;
  height: 22px;
  box-sizing: border-box;
  background: ${(p) => p.$color};
  border: 1px solid ${(p) => p.$line ?? p.$color};
`;

const RowIndicator = styled.span`
  margin-left: auto;
  margin-right: 2px;
`;

const Tick = () => (
  <IconSvg $h={17} $w={15} viewBox="0 0 16 18">
    <path d="M2 9l4 6 7-13" fill="none" stroke="#000" strokeWidth="2.6" />
  </IconSvg>
);

const DockGutter = styled.div`
  flex: none;
  width: 10px;
  display: flex;
  justify-content: flex-end;
  &::after {
    content: "";
    width: 2px;
    height: 34px;
    margin: 648px 1px 0 0;
    background: repeating-linear-gradient(#c4c4c4 0 2px, transparent 2px 5px);
  }
`;

const MapArea = styled.div`
  flex: none;
  width: 2154px;
  margin-top: 2px;
  box-sizing: border-box;
  background: #fff;
  border-right: 2px solid #bcbcbc;
  height: 1321px;
`;

const MapSvg = styled.svg`
  display: block;
`;

const StatusBar = styled.div`
  flex: none;
  height: 37px;
  box-sizing: border-box;
  padding: 5px 12px 0 6px;
  display: flex;
  align-items: center;
  font-size: 14.5px;
  background: #efefef;
`;

const Locator = styled.div`
  flex: none;
  width: 371px;
  height: 31px;
  box-sizing: border-box;
  padding-left: 12px;
  display: flex;
  align-items: center;
  gap: 12px;
  background: #fff;
  border: 1.5px solid #bcbcbc;
  border-radius: 3px;
  color: #777;
  font-size: 15.3px;
`;

const StatusGroup = styled.div`
  margin-left: auto;
  display: flex;
  align-items: center;
`;

const StatusLabel = styled.span<{ $w: number; $ml: number }>`
  flex: none;
  width: ${(p) => p.$w}px;
  margin-left: ${(p) => p.$ml}px;
  white-space: nowrap;
`;

const StatusIcon = styled.span<{ $ml: number }>`
  flex: none;
  margin-left: ${(p) => p.$ml}px;
`;

const Field = styled.div<{ $w: number; $ml: number }>`
  flex: none;
  width: ${(p) => p.$w}px;
  margin-left: ${(p) => p.$ml}px;
  height: 31px;
  box-sizing: border-box;
  padding-left: 6px;
  display: flex;
  align-items: center;
  font-size: 15px;
  background: #fff;
  border: 1.5px solid #bcbcbc;
  border-radius: 3px;
  white-space: nowrap;
  overflow: hidden;
`;

const FieldEnd = styled.div`
  margin-left: auto;
  width: 22px;
  height: 100%;
  display: flex;
  flex-direction: column;
  align-items: center;
  justify-content: center;
  gap: 4px;
  background: #e8e8e8;
  border-left: 1px solid #ccc;
`;

const ArrowUp = styled.span`
  border-left: 5px solid transparent;
  border-right: 5px solid transparent;
  border-bottom: 6px solid #666;
`;

const ArrowDown = styled.span`
  border-left: 5px solid transparent;
  border-right: 5px solid transparent;
  border-top: 6px solid #666;
`;

const Popup = styled.div<{ $left: number; $top: number; $w: number }>`
  position: absolute;
  left: ${(p) => p.$left}px;
  top: ${(p) => p.$top}px;
  width: ${(p) => p.$w}px;
  box-sizing: border-box;
  background: #fff;
  border: 1.5px solid #a0a0a0;
  box-shadow: 3px 3px 4px rgba(0, 0, 0, 0.45);
  z-index: 2;
`;

const PopupItem = styled.div<{ $h: number; $active?: boolean }>`
  height: ${(p) => p.$h}px;
  box-sizing: border-box;
  display: flex;
  align-items: center;
  font-size: 16px;
  white-space: nowrap;
  background: ${(p) => (p.$active ? "#0078d7" : "transparent")};
  color: ${(p) => (p.$active ? "#fff" : "#000")};
  border: ${(p) => (p.$active ? "2px solid #3a9ae6" : "2px solid transparent")};
`;

const PopupIcon = styled.span`
  flex: none;
  width: 37.5px;
  padding-left: 6px;
  box-sizing: border-box;
`;

const SubArrow = styled.span<{ $active?: boolean }>`
  margin-left: auto;
  margin-right: 6px;
  border-left: 6px solid ${(p) => (p.$active ? "#cfe6fa" : "#555")};
  border-top: 6px solid transparent;
  border-bottom: 6px solid transparent;
`;

const PointerArrow = styled.svg`
  position: absolute;
  left: 1129px;
  top: -52px;
  width: 40px;
  height: 212px;
  z-index: 3;
`;

const menus: { label: React.ReactNode; w: number; pad?: number; active?: boolean }[] = [
  { label: <>Pro<u>y</u>ecto</>, w: 104, pad: 15 },
  { label: <><u>E</u>dición</>, w: 75 },
  { label: <><u>V</u>er</>, w: 46 },
  { label: <><u>C</u>apa</>, w: 60 },
  { label: <>Con<u>f</u>iguración</>, w: 131 },
  { label: <>Co<u>m</u>plementos</>, w: 134 },
  { label: <>Vect<u>o</u>rial</>, w: 77, pad: 6, active: true },
  { label: <><u>R</u>áster</>, w: 82, pad: 15 },
  { label: <>Base de <u>d</u>atos</>, w: 125 },
  { label: <><u>W</u>eb</>, w: 56 },
  { label: <>MMQGIS</>, w: 90 },
  { label: <>Pro<u>c</u>esos</>, w: 89 },
  { label: <>A<u>y</u>uda</>, w: 80 },
];

const sideIcons: [string, boolean][] = [
  ["vGreen", false], ["rasterG", false], ["commaG", false], ["featherG", false], ["virtualG", false],
  ["pgG", true], ["wmsG", true], ["wcsG", false], ["wfsG", true], ["vYellow", true],
];

const browserItems: [string, string, boolean][] = [
  ["star", "Favoritos", false],
  ["projectHome", "Inicio del proyecto", true],
  ["homeFolder", "Inicio", true],
  ["folder", "C:\\", true],
  ["folder", "G:\\", true],
  ["gpkg", "GeoPackage", false],
  ["feather", "SpatiaLite", false],
  ["elephant", "PostGIS", false],
  ["mssql", "MSSQL", false],
  ["oracle", "Oracle", false],
  ["db2", "DB2", false],
  ["globe", "WMS/WMTS", false],
  ["globe", "XYZ Tiles", true],
  ["globeDark", "WCS", false],
  ["globeWfs", "WFS", false],
  ["globeLight", "OWS", false],
  ["arc", "ArcGisMapServer", false],
  ["arcF", "ArcGisFeatureServer", false],
  ["geonode", "GeoNode", false],
];

type LayerRow = {
  name: string;
  level: number;
  exp?: "open" | "closed";
  on?: boolean;
  icon?: string;
  swatch?: [string, string?];
  tone?: "normal" | "off" | "bold" | "selected";
  mark?: string;
};

const layers: LayerRow[] = [
  { name: "accesibilidad", level: 0, exp: "closed", icon: "group" },
  { name: "transporte", level: 0, exp: "closed", icon: "group" },
  { name: "gestión colaborativa", level: 0, exp: "closed", icon: "group" },
  { name: "actividades", level: 0, exp: "closed", icon: "group" },
  { name: "agenda-eventos-culturales-gratis", level: 0, exp: "closed", icon: "points", tone: "off" },
  { name: "agenda-eventos-culturales-hora", level: 0, exp: "closed", icon: "points", tone: "off" },
  { name: "aibnb", level: 0, exp: "open", on: true, icon: "group" },
  { name: "inside-airbnb-price", level: 1, exp: "closed", icon: "points", tone: "off" },
  { name: "Cuadrícula", level: 1, swatch: ["#fff", "#888"], tone: "off", mark: "ind" },
  { name: "inside-airbnb-reviews", level: 1, exp: "closed", icon: "points", tone: "off" },
  { name: "grid", level: 1, exp: "open", on: true, icon: "group" },
  { name: "Centroides", level: 2, exp: "closed", icon: "points", tone: "off" },
  { name: "count-airbnb-grid", level: 2, exp: "closed", icon: "polyDim", tone: "off", mark: "indFilter" },
  { name: "Centroides", level: 2, exp: "closed", icon: "points", tone: "off", mark: "indFilter" },
  { name: "Centroides copiar", level: 2, exp: "closed", icon: "points", tone: "off", mark: "indFilter" },
  { name: "Capa unida", level: 2, on: true, swatch: ["#9a5ea6"], tone: "selected" },
  { name: "BARRIOS-airbnb-count", level: 0, exp: "closed", icon: "polyDim", tone: "off" },
  { name: "edificios-madrid", level: 0, on: true, swatch: ["#5a6d9f"], tone: "bold" },
  { name: "BARRIOS", level: 0, on: true, swatch: ["#e9eef8"], tone: "bold" },
  { name: "Cuadrícula", level: 0, swatch: ["#fff", "#bbb"], tone: "off", mark: "ind" },
];

const vectorItems: { label: React.ReactNode; icon?: string; active?: boolean }[] = [
  { label: <><u>N</u>NJoin</> },
  { label: "QuickOSM", icon: "quickOsm" },
  { label: <>Herramientas de <u>g</u>eoproceso</> },
  { label: <>Herramientas de <u>g</u>eometría</>, active: true },
  { label: <>Herramientas de <u>a</u>nálisis</> },
  { label: <>Herramientas de gestión de <u>d</u>atos</> },
  { label: <>Herramientas de <u>i</u>nvestigación</> },
];

const geometryItems: [string, string][] = [
  ["centroid", "Centroides..."],
  ["collect", "Recopilar geometrías..."],
  ["vertices", "Extraer vértices..."],
  ["multi", "Multiparte a monoparte..."],
  ["simplify", "Simplificar..."],
  ["check", "Comprobar validez..."],
  ["delaunay", "Triangulación de Delaunay..."],
  ["gear", "Densificar por conteo..."],
  ["addGeom", "Agregar atributos de geometría..."],
  ["linePoly", "Líneas a polígonos..."],
  ["polyLine", "Polígonos a líneas..."],
  ["voronoi", "Polígonos Voronoi..."],
];

const MAP_W = 2138;
const MAP_H = 1319;
const STEP = 29.926;

const GridMap = () => {
  const lines = useMemo(() => {
    const out: { x1: number; y1: number; x2: number; y2: number; o: number; w: number }[] = [];
    for (let x = 13.3, i = 0; x < MAP_W; x += STEP, i++) {
      const seed = (i * 7919) % 11;
      out.push({ x1: x, y1: 0, x2: x, y2: MAP_H, o: 0.72 + seed * 0.02, w: 1.3 + (seed % 3) * 0.25 });
    }
    for (let y = 4.3, i = 0; y < MAP_H; y += STEP, i++) {
      const seed = (i * 104729) % 13;
      out.push({ x1: 0, y1: y, x2: MAP_W, y2: y, o: 0.72 + seed * 0.02, w: 1.3 + (seed % 3) * 0.25 });
    }
    // a few cell edges are drawn twice in the data and read darker
    for (let n = 1; n < 110; n++) {
      const col = (n * 37) % 71;
      const row = (n * 53) % 43;
      const x = 13.3 + col * STEP;
      const y = 4.3 + row * STEP;
      if (n % 2) out.push({ x1: x, y1: y, x2: x + STEP, y2: y, o: 0.6, w: 1.8 });
      else out.push({ x1: x, y1: y, x2: x, y2: y + STEP, o: 0.6, w: 1.8 });
    }
    return out;
  }, []);
  return (
    <MapSvg width={MAP_W} height={MAP_H} viewBox={`0 0 ${MAP_W} ${MAP_H}`}>
      <rect width={MAP_W} height={MAP_H} fill="#e15887" />
      {lines.map((l, i) => (
        <line key={i} x1={l.x1} y1={l.y1} x2={l.x2} y2={l.y2} stroke="#262626" strokeOpacity={l.o} strokeWidth={l.w} />
      ))}
      <path d={`M${MAP_W - 0.5} 0V${MAP_H}`} stroke="#333" />
    </MapSvg>
  );
};

const App = () => (
  <Page>
    <GlobalStyle />
    <Title>Vector / Geometry Tools / Centroids</Title>
    <AppWindow>
      <TitleBar>
        <Icon name="qgis" size={23} />
        <WindowName>*clase2 - QGIS</WindowName>
        <WindowButtons>
          <IconSvg $h={16} $w={15} viewBox="0 0 16 16"><path d="M0 8h16" stroke="#222" strokeWidth="1.2" /></IconSvg>
          <IconSvg $h={16} $w={15} viewBox="0 0 16 16"><path d="M1 5h10v10H1zM4 4V1h11v10h-3" fill="none" stroke="#000" strokeWidth="1.8" /></IconSvg>
          <IconSvg $h={16} $w={15} viewBox="0 0 16 16"><path d="M1 1l14 14M15 1 1 15" stroke="#222" strokeWidth="1.3" /></IconSvg>
        </WindowButtons>
      </TitleBar>
      <MenuBar>
        {menus.map((m, i) => (
          <MenuTop key={i} $w={m.w} $pad={m.pad} $active={m.active}>{m.label}</MenuTop>
        ))}
      </MenuBar>
      <Toolbar items={toolsTop} h={47} line="#bdbdbd" />
      <Toolbar items={toolsBottom} h={44} line="#bdbdbd" />
      <Main>
        <SideBar>
          {sideIcons.map(([name, drop], i) => (
            <SideSlot key={i}>
              <Icon name={name} />
              {drop && <DropCaret />}
            </SideSlot>
          ))}
        </SideBar>
        <PanelColumn>
          <PanelHeader>Navegador</PanelHeader>
          <PanelTools $h={43} $pb={4}>
            {["pageG", "refresh", "filter", "collapse", "infoB"].map((n) => (
              <PanelTool key={n} $w={37}><Icon name={n} size={25} /></PanelTool>
            ))}
          </PanelTools>
          <TreeBox $h={572} $pt={0}>
            {browserItems.map(([icon, name, exp]) => (
              <BrowserRow key={name}>
                <Expander $state={exp ? "closed" : undefined} />
                <Icon name={icon} size={24} />
                <BrowserName>{name}</BrowserName>
              </BrowserRow>
            ))}
          </TreeBox>
          <Splitter />
          <PanelHeader>
            Capas
            <PanelButtons>
              <PanelButton>❐</PanelButton>
              <PanelButton>✕</PanelButton>
            </PanelButtons>
          </PanelHeader>
          <PanelTools $h={43}>
            <PanelTool $w={40}><Icon name="brush" size={24} /></PanelTool>
            <PanelTool $w={36}><Icon name="groupAdd" size={24} /></PanelTool>
            <PanelTool $w={38}><Icon name="eye" size={24} /></PanelTool>
            <PanelTool $w={36}><Icon name="filter" size={24} /></PanelTool>
            <PanelTool $w={40}><Icon name="epsilon" size={24} /></PanelTool>
            <DropCaret $w={12} />
            <PanelTool $w={38}><Icon name="expand" size={24} /></PanelTool>
            <PanelTool $w={36}><Icon name="collapse" size={24} /></PanelTool>
            <PanelTool $w={36}><Icon name="removeLayer" size={24} /></PanelTool>
          </PanelTools>
          <TreeBox $h={595}>
            {layers.map((l, i) => (
              <TreeRow key={i} $level={l.level} $selected={l.tone === "selected"}>
                <Expander $state={l.exp} />
                <CheckBox $on={l.on}>{l.on && <Tick />}</CheckBox>
                <Spacer $w={10.4} />
                {l.swatch ? <Swatch $color={l.swatch[0]} $line={l.swatch[1]} /> : <Icon name={l.icon ?? "group"} size={24} />}
                <RowName $tone={l.tone}>{l.name}</RowName>
                {l.mark && <RowIndicator><Icon name={l.mark} size={22} /></RowIndicator>}
              </TreeRow>
            ))}
          </TreeBox>
        </PanelColumn>
        <DockGutter />
        <MapArea>
          <GridMap />
        </MapArea>
      </Main>
      <StatusBar>
        <Locator>
          <Icon name="search" size={18} />
          Escriba para localizar (Ctrl+K)
        </Locator>
        <StatusGroup>
          <StatusLabel $w={87} $ml={0}>Coordenada</StatusLabel>
          <Field $w={133} $ml={5.5}>427796,4466163</Field>
          <StatusIcon $ml={9}><Icon name="crsLink" size={24} width={20} /></StatusIcon>
          <StatusLabel $w={43} $ml={19}>Escala</StatusLabel>
          <Field $w={116} $ml={7}>1:92081<FieldEnd><ArrowDown /></FieldEnd></Field>
          <StatusIcon $ml={18}><Icon name="lock" size={26} width={20} /></StatusIcon>
          <StatusLabel $w={81} $ml={12}>Amplificador</StatusLabel>
          <Field $w={126} $ml={8}>100%<FieldEnd><ArrowUp /><ArrowDown /></FieldEnd></Field>
          <StatusLabel $w={62} $ml={13}>Rotación</StatusLabel>
          <Field $w={120} $ml={15}>0,0 °<FieldEnd><ArrowUp /><ArrowDown /></FieldEnd></Field>
          <StatusIcon $ml={12}><CheckBox $on $w={19} $h={26}><Tick /></CheckBox></StatusIcon>
          <StatusLabel $w={88} $ml={5}>Representar</StatusLabel>
          <StatusIcon $ml={28}><Icon name="globeDark" size={22} width={20} /></StatusIcon>
          <StatusLabel $w={78} $ml={6}>EPSG:3042</StatusLabel>
          <StatusIcon $ml={29}><Icon name="msg" size={26} width={22} /></StatusIcon>
        </StatusGroup>
      </StatusBar>

      <Popup $left={550} $top={67} $w={416}>
        {vectorItems.map((m, i) => (
          <PopupItem key={i} $h={33.5} $active={m.active}>
            <PopupIcon>{m.icon && <Icon name={m.icon} size={24} />}</PopupIcon>
            <span>{m.label}</span>
            <SubArrow $active={m.active} />
          </PopupItem>
        ))}
      </Popup>
      <Popup $left={966} $top={168} $w={394}>
        {geometryItems.map(([icon, label], i) => (
          <PopupItem key={label} $h={33.3} $active={i === 0}>
            <PopupIcon><Icon name={icon} size={24} /></PopupIcon>
            <span>{label}</span>
          </PopupItem>
        ))}
      </Popup>
      <PointerArrow viewBox="0 0 40 212">
        <path d="M18 0v208M3 189l15 19 16-19" fill="none" stroke="#2b3a67" strokeWidth="4" />
      </PointerArrow>
    </AppWindow>
  </Page>
);

export default App;
